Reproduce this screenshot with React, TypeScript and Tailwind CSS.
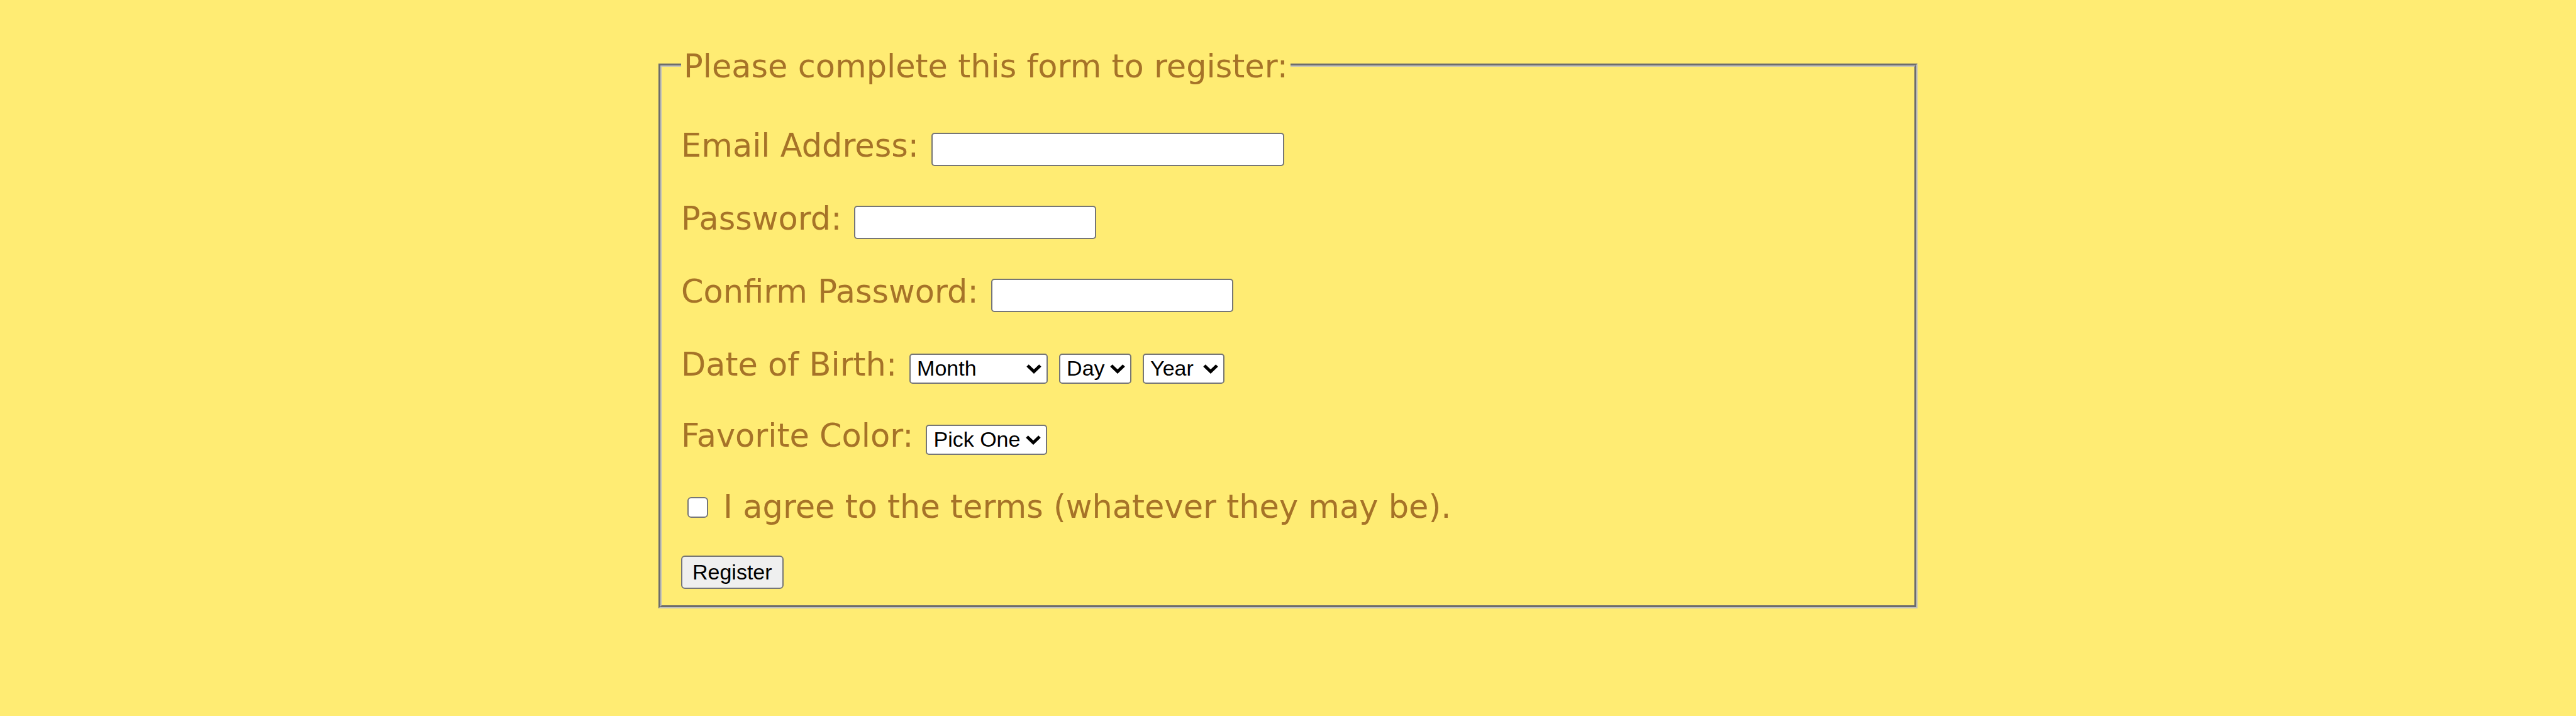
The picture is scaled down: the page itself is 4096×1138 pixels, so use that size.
import type { ReactNode, SelectHTMLAttributes } from "react";

const inputClass =
  "h-[53px] rounded-[5px] border-2 border-[#767676] bg-white px-[5px] font-['Liberation_Sans',Arial,sans-serif] text-[34px] leading-[39px] text-black";

function Row({ children }: { children: ReactNode }) {
  return <div className="flex items-baseline gap-5">{children}</div>;
}

function Select({ children, className, ...props }: SelectHTMLAttributes<HTMLSelectElement>) {
  return (
    <span className="relative inline-flex items-baseline">
      <select
        {...props}
        className={`h-12 appearance-none rounded-[5px] border-2 border-[#767676] bg-white pr-8 pl-2.5 font-['Liberation_Sans',Arial,sans-serif] text-[34px] leading-[39px] text-black ${className}`}
      >
        {children}
      </select>
      <svg
        viewBox="0 0 24 15"
        className="pointer-events-none absolute top-[17px] right-2.5 h-[15px] w-6"
        fill="none"
        stroke="#000"
        strokeWidth="5"
        aria-hidden="true"
      >
        <path d="M2 2 L12 11.5 L22 2" />
      </svg>
    </span>
  );
}

const months = [
  "January", "February", "March", "April", "May", "June",
  "July", "August", "September", "October", "November", "December",
];
const days = Array.from({ length: 31 }, (_, i) => i + 1);
const years = Array.from({ length: 100 }, (_, i) => 2020 - i);
const colors = ["Red", "Green", "Blue", "Yellow"];

export default function App() {
  return (
    <main className="min-h-screen bg-[#ffec73] px-8 pt-[70px] pb-16 font-['DejaVu_Sans',Verdana,sans-serif] text-[51px] leading-[62px] text-[#a67328]">
      <form className="mx-auto w-full max-w-[2002px]" onSubmit={(e) => e.preventDefault()}>
        <fieldset className="border-[5px] border-[#c0c0c0] px-[31px] pb-[26px] [border-style:groove]">
          <legend className="px-1 pt-[5px]">Please complete this form to register:</legend>
          <div className="flex flex-col gap-[51px] pt-16">
            <div className="min-h-[65px]">
              <Row>
                <label htmlFor="email">Email Address:</label>
                <input id="email" type="email" className={`${inputClass} w-[561px]`} />
              </Row>
            </div>
            <div className="min-h-[65px]">
              <Row>
                <label htmlFor="password">Password:</label>
                <input id="password" type="password" className={`${inputClass} w-[385px]`} />
              </Row>
            </div>
            <div className="min-h-[65px]">
              <Row>
                <label htmlFor="confirm">Confirm Password:</label>
                <input id="confirm" type="password" className={`${inputClass} w-[385px]`} />
              </Row>
            </div>
            <Row>
              <label htmlFor="month">Date of Birth:</label>
              <div className="flex items-baseline gap-[18px]">
                <Select id="month" className="w-[220px]">
                  <option>Month</option>
                  {months.map((m) => <option key={m}>{m}</option>)}
                </Select>
                <Select aria-label="Day" className="w-[115px]">
                  <option>Day</option>
                  {days.map((d) => <option key={d}>{d}</option>)}
                </Select>
                <Select aria-label="Year" className="w-[130px]">
                  <option>Year</option>
                  {years.map((y) => <option key={y}>{y}</option>)}
                </Select>
              </div>
            </Row>
            <Row>
              <label htmlFor="color">Favorite Color:</label>
              <Select id="color" className="w-[193px]">
                <option>Pick One</option>
                {colors.map((c) => <option key={c}>{c}</option>)}
              </Select>
            </Row>
            <div className="flex items-baseline gap-6 pl-2.5">
              <input
                id="terms"
                type="checkbox"
                className="size-[33px] shrink-0 appearance-none rounded-[6px] border-2 border-[#767676] bg-white checked:bg-[#0075ff]"
              />
              <label htmlFor="terms">I agree to the terms (whatever they may be).</label>
            </div>
          </div>
          <button
            type="submit"
            className="mt-[46px] block h-[53px] rounded-[6px] border-2 border-[#767676] bg-[#efefef] px-4 font-['Liberation_Sans',Arial,sans-serif] text-[34px] leading-[39px] text-black"
          >
            Register
          </button>
        </fieldset>
      </form>
    </main>
  );
}
